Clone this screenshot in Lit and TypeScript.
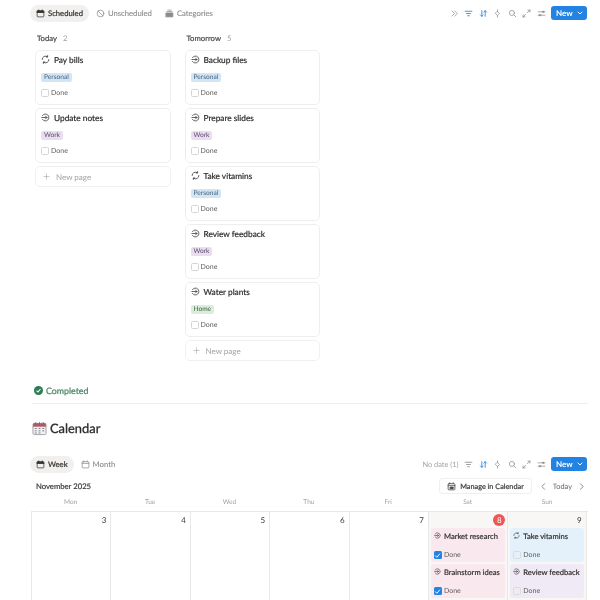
import { LitElement, html, css, svg } from "lit";
import { customElement } from "lit/decorators.js";

type Tag = "Personal" | "Work" | "Home";
type Task = { title: string; kind: "sync" | "arrow"; tag: Tag };

const today: Task[] = [
  { title: "Pay bills", kind: "sync", tag: "Personal" },
  { title: "Update notes", kind: "arrow", tag: "Work" },
];
const tomorrow: Task[] = [
  { title: "Backup files", kind: "arrow", tag: "Personal" },
  { title: "Prepare slides", kind: "arrow", tag: "Work" },
  { title: "Take vitamins", kind: "sync", tag: "Personal" },
  { title: "Review feedback", kind: "arrow", tag: "Work" },
  { title: "Water plants", kind: "arrow", tag: "Home" },
];

const ic = (body: unknown, size = 10, sw = 1.3) =>
  html`<svg width=${size} height=${size} viewBox="0 0 16 16" fill="none" stroke="currentColor" stroke-width=${sw} stroke-linecap="round" stroke-linejoin="round">${body}</svg>`;

const syncIcon = svg`<path d="M2 8a6 6 0 0 1 9.5-4.9"/><path d="M11.8 1v2.6H9.2"/><path d="M14 8a6 6 0 0 1-9.5 4.9"/><path d="M4.2 15v-2.6h2.6"/>`;
const arrowIcon = svg`<path d="M2.6 4.5a6.2 6.2 0 1 1 0 7"/><path d="M1.5 8h9"/><path d="M8 5.4 10.6 8 8 10.6"/>`;
const calFilled = svg`<rect x="2" y="3" width="12" height="11" rx="1.5"/><path d="M2 6h12M5 1.5V3M11 1.5V3"/><path d="M2.5 3.5h11V6h-11z" fill="currentColor"/>`;
const calOutline = svg`<rect x="2" y="3" width="12" height="11" rx="1.5"/><path d="M2 6h12M5 1.5V3M11 1.5V3"/>`;
const banIcon = svg`<circle cx="8" cy="8" r="6"/><path d="M3.8 3.8l8.4 8.4"/>`;
const stackIcon = svg`<path d="M2 7h12v7H2z" fill="currentColor"/><path d="M3.5 4.5h9M5 2h6"/>`;
const chevrons = svg`<path d="M3.5 3.5 8 8l-4.5 4.5M8.5 3.5 13 8l-4.5 4.5"/>`;
const filterIcon = svg`<path d="M2 4h12M4.5 8h7M6.5 12h3"/>`;
const sortIcon = svg`<path d="M5 13V3M2.5 10.5 5 13l2.5-2.5M11 3v10M8.5 5.5 11 3l2.5 2.5"/>`;
const boltIcon = svg`<path d="M8 1.5v3M8 11.5v3M8 4.5 11.5 8 8 11.5 4.5 8z"/>`;
const searchIcon = svg`<circle cx="7" cy="7" r="4.5"/><path d="m10.5 10.5 3.5 3.5"/>`;
const expandIcon = svg`<path d="M9.5 6.5 14 2M14 2h-3.5M14 2v3.5M6.5 9.5 2 14M2 14h3.5M2 14v-3.5"/>`;
const slidersIcon = svg`<path d="M2 5h7M12.5 5H14M2 11h1.5M7 11h7"/><circle cx="10.8" cy="5" r="1.4" fill="currentColor"/><circle cx="5.2" cy="11" r="1.4" fill="currentColor"/>`;
const manageIcon = svg`<rect x="2" y="3" width="12" height="11" rx="1.5"/><path d="M2 6.5h12M5 1.5V3M11 1.5V3"/><path d="M6 9h5v3H6z" fill="currentColor"/>`;

@customElement("app-root")
export class AppRoot extends LitElement {
  static styles = css`
    :host {
      display: block;
      width: 600px;
      height: 600px;
      overflow: hidden;
      font-family: Lato, sans-serif;
      font-size: 8px;
      text-rendering: geometricPrecision;
      color: #2c2c2b;
      will-change: transform;
    }
    svg { display: block; flex: none; }
    .top { display: flex; align-items: center; justify-content: space-between; padding: 2px 13px 0 30px; height: 22px; }
    .tabs { display: flex; gap: 1px; align-items: center; }
    .tab { display: flex; align-items: center; gap: 3px; height: 17px; padding: 0 6px; border-radius: 9px; color: #8b8a87; font-size: 7.7px; -webkit-text-stroke: 0.1px currentColor; }
    .tab.on { background: #f1f0ef; color: #32312f; -webkit-text-stroke: 0.2px currentColor; }
    .tools { display: flex; align-items: center; gap: 5.5px; color: #8d8c89; }
    .tools .blue { color: #2383e2; }
    .nodate { color: #a3a29f; font-size: 7.4px; }
    .new { display: flex; align-items: center; justify-content: space-between; height: 14px; width: 36px; box-sizing: border-box; padding: 0 3px 0 5px; background: #2383e2; color: #fff; border-radius: 3px; font-weight: 700; }
    .board { display: flex; gap: 14px; padding: 4px 0 0 35px; height: 356px; }
    .col { width: 135.5px; display: flex; flex-direction: column; gap: 3px; }
    .col-head { display: flex; gap: 6px; height: 19px; align-items: center; padding-left: 2px; font-size: 7.7px; -webkit-text-stroke: 0.2px currentColor; color: #4a4947; }
    .col-head span { color: #a3a29f; -webkit-text-stroke: 0; }
    .card { height: 55px; box-sizing: border-box; border-radius: 5px; border: 1px solid #efeeec; padding: 3px 5px; }
    .title { display: flex; align-items: center; gap: 4px; height: 11px; -webkit-text-stroke: 0.2px currentColor; color: #2c2c2b; font-size: 8.3px; white-space: nowrap; }
    .tag { display: block; width: fit-content; height: 9px; line-height: 9px; margin-top: 8px; padding: 0 3px; border-radius: 2px; font-size: 6.6px; }
    .Personal { background: #d3e5f4; color: #3f5f7a; }
    .Work { background: #e8deee; color: #5f4b73; }
    .Home { background: #dbeddb; color: #3c5f47; }
    .done { display: flex; align-items: center; gap: 2px; margin-top: 7px; color: #5f5e5b; font-size: 7px; }
    .box { width: 6px; height: 6px; border: 1px solid #d6d5d2; border-radius: 1.5px; background: #fff; }
    .newpage { height: 21px; box-sizing: border-box; display: flex; align-items: center; gap: 6px; padding-left: 7px; border-radius: 5px; border: 1px solid #f1f0ee; color: #a3a29f; font-size: 8px; }
    .completed { display: flex; align-items: center; gap: 3px; padding-left: 34px; height: 13px; color: #448361; -webkit-text-stroke: 0.2px currentColor; font-size: 8.8px; }
    .rule { height: 1px; background: #eeedeb; margin: 6px 12px 0 32px; }
    .heading { display: flex; align-items: center; gap: 3px; padding-left: 32px; margin-top: 14px; height: 20px; font-size: 12.9px; -webkit-text-stroke: 0.3px currentColor; color: #2c2c2b; }
    .top.second { padding-top: 0; margin-top: 15px; }
    .cal { padding: 0 12px 0 31px; }
    .cal-head { display: flex; align-items: center; justify-content: space-between; height: 16px; padding: 0 2px 0 5px; margin-top: 3px; }
    .month { font-size: 7.7px; -webkit-text-stroke: 0.2px currentColor; color: #3a3937; }
    .nav { display: flex; align-items: center; gap: 5px; color: #5f5e5b; font-size: 7.4px; }
    .manage { display: flex; align-items: center; gap: 4px; height: 14px; padding: 0 7px; margin-right: 3px; border-radius: 3px; box-shadow: 0 0 0 1px #f0efed; font-size: 7.3px; -webkit-text-stroke: 0.2px currentColor; color: #3a3937; }
    .days, .grid { display: grid; grid-template-columns: repeat(7, 79.4px); }
    .days { height: 17px; align-items: center; text-align: center; color: #a3a29f; font-size: 6.5px; }
    .grid { border-top: 1px solid #e9e8e6; height: 90px; }
    .cell { box-sizing: border-box; border-left: 1px solid #e9e8e6; padding: 2px 2px 0 2px; display: flex; flex-direction: column; gap: 2px; }
    .cell:last-child { border-right: 1px solid #e9e8e6; }
    .cell.wk { background: #f8f7f6; }
    .num { height: 12px; display: flex; align-items: center; justify-content: flex-end; padding-right: 2px; color: #3a3937; }
    .num.now { padding-right: 0; }
    .num.now span { width: 12px; height: 12px; border-radius: 50%; background: #eb5757; color: #fff; display: flex; align-items: center; justify-content: center; }
    .ev { height: 34px; border-radius: 3px; box-sizing: border-box; padding: 1px 3px; }
    .ev.red { background: #f9e8ee; }
    .ev.blue { background: #e5f1fa; }
    .ev.pur { background: #f0e9f6; }
    .ev .title { gap: 3px; height: 13px; font-size: 7.6px; color: #33322f; }
    .ev .done { margin-top: 9px; }
    .ev .done .box.blank { background: transparent; border-color: #dcdbd9; }
    .check { width: 7px; height: 7px; padding: 0.5px; border-radius: 1.5px; background: #2383e2; color: #fff; }
  `;

  private taskCard(t: Task) {
    return html`<div class="card">
      <div class="title">${ic(t.kind === "sync" ? syncIcon : arrowIcon, 9)}${t.title}</div>
      <span class="tag ${t.tag}">${t.tag}</span>
      <div class="done"><div class="box"></div>Done</div>
    </div>`;
  }

  private eventCard(title: string, kind: Task["kind"], color: string, checked: boolean) {
    return html`<div class="ev ${color}">
      <div class="title">${ic(kind === "sync" ? syncIcon : arrowIcon, 7)}${title}</div>
      <div class="done">
        ${checked
          ? html`<div class="check">${ic(svg`<path d="M3 8.5 6.5 12 13 4.5"/>`, 7, 2.2)}</div>`
          : html`<div class="box blank"></div>`}
        Done
      </div>
    </div>`;
  }

  private toolbar(first: boolean) {
    return html`<div class="tools">
      ${first ? ic(chevrons, 9) : html`<span class="nodate">No date (1)</span>`}
      <span class=${first ? "blue" : ""}>${ic(filterIcon, 9, 1.5)}</span>
      <span class="blue">${ic(sortIcon, 9, 1.5)}</span>
      ${ic(boltIcon, 9)}${ic(searchIcon, 9)}${ic(expandIcon, 9)}${ic(slidersIcon, 9)}
      <div class="new">New ${ic(svg`<path d="m4 6 4 4 4-4"/>`, 8, 2)}</div>
    </div>`;
  }

  render() {
    return html`
      <div class="top">
        <div class="tabs">
          <div class="tab on">${ic(calFilled, 9)}Scheduled</div>
          <div class="tab">${ic(banIcon, 9)}Unscheduled</div>
          <div class="tab">${ic(stackIcon, 9)}Categories</div>
        </div>
        ${this.toolbar(true)}
      </div>
      <div class="board">
        <div class="col">
          <div class="col-head">Today <span>2</span></div>
          ${today.map((t) => this.taskCard(t))}
          <div class="newpage">${ic(svg`<path d="M8 2v12M2 8h12"/>`, 7)}New page</div>
        </div>
        <div class="col">
          <div class="col-head">Tomorrow <span>5</span></div>
          ${tomorrow.map((t) => this.taskCard(t))}
          <div class="newpage">${ic(svg`<path d="M8 2v12M2 8h12"/>`, 7)}New page</div>
        </div>
      </div>
      <div class="completed">
        <svg width="9" height="9" viewBox="0 0 16 16"><circle cx="8" cy="8" r="8" fill="#2f7a57"/><path d="M4.5 8.2 7 10.7l4.5-5" fill="none" stroke="#fff" stroke-width="1.8"/></svg>
        Completed
      </div>
      <div class="rule"></div>
      <div class="heading">
        <svg width="15" height="15" viewBox="0 0 16 16"><rect x="1" y="2.5" width="14" height="12" rx="1.5" fill="#f2f1f3" stroke="#8d8a92" stroke-width=".8"/><path d="M1.2 3.5a1 1 0 0 1 1-1h11.6a1 1 0 0 1 1 1V6H1.2z" fill="#b5596a"/><path d="M4 1.2v3M8 1.2v3M12 1.2v3" stroke="#6b6770" stroke-width=".9"/><path d="M3 8h2M7 8h2M11 8h2M3 10.5h2M7 10.5h2M11 10.5h2M3 12.8h2M7 12.8h2" stroke="#7a7780" stroke-width="1"/></svg>
        Calendar
      </div>
      <div class="top second">
        <div class="tabs">
          <div class="tab on">${ic(calFilled, 9)}Week</div>
          <div class="tab">${ic(calOutline, 9)}Month</div>
        </div>
        ${this.toolbar(false)}
      </div>
      <div class="cal">
        <div class="cal-head">
          <span class="month">November 2025</span>
          <div class="nav">
            <div class="manage">${ic(manageIcon, 9)}Manage in Calendar</div>
            ${ic(svg`<path d="M10 3 5 8l5 5"/>`, 9)}<span>Today</span>${ic(svg`<path d="m6 3 5 5-5 5"/>`, 9)}
          </div>
        </div>
        <div class="days">
          ${["Mon", "Tue", "Wed", "Thu", "Fri", "Sat", "Sun"].map((d) => html`<div>${d}</div>`)}
        </div>
        <div class="grid">
          ${[3, 4, 5, 6, 7].map((n) => html`<div class="cell"><div class="num">${n}</div></div>`)}
          <div class="cell wk">
            <div class="num now"><span>8</span></div>
            ${this.eventCard("Market research", "arrow", "red", true)}
            ${this.eventCard("Brainstorm ideas", "arrow", "red", true)}
          </div>
          <div class="cell wk">
            <div class="num">9</div>
            ${this.eventCard("Take vitamins", "sync", "blue", false)}
            ${this.eventCard("Review feedback", "arrow", "pur", false)}
          </div>
        </div>
      </div>
    `;
  }
}
